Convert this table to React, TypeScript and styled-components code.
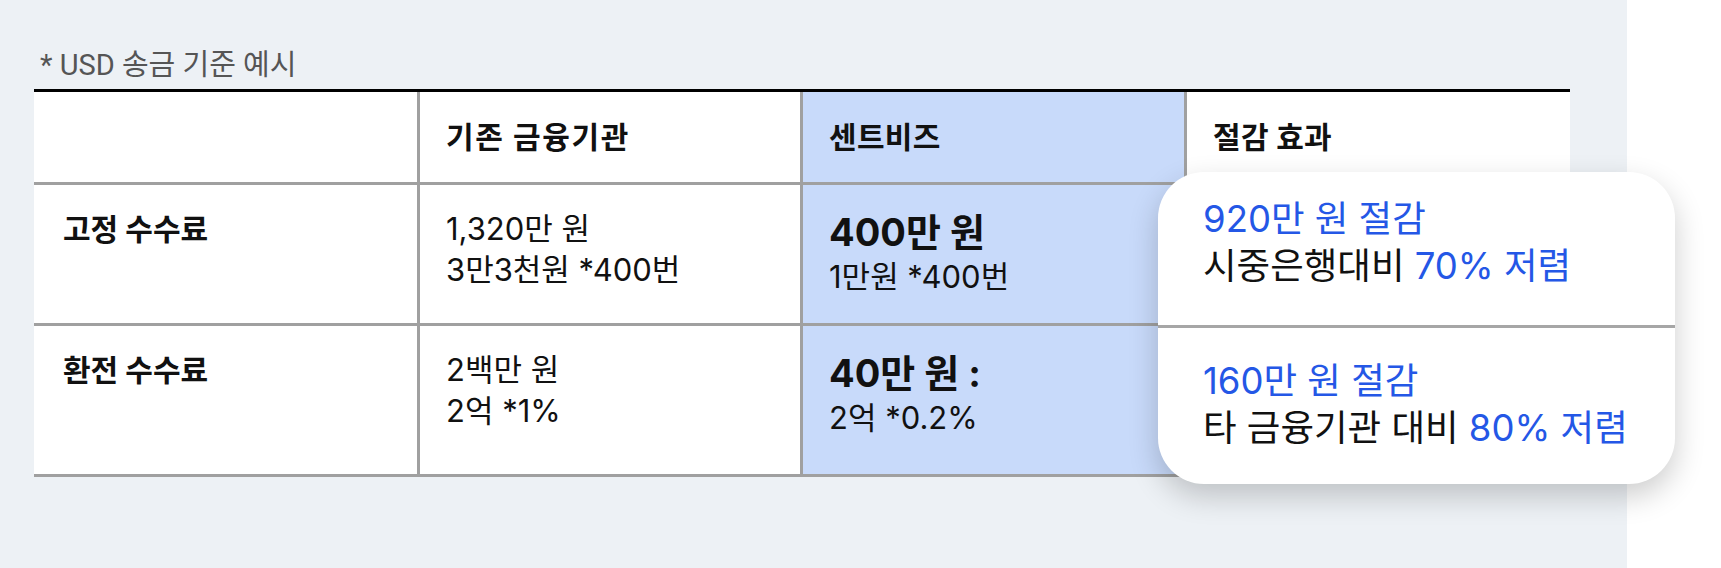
import React from "react";
import styled, { createGlobalStyle } from "styled-components";

const GlobalStyle = createGlobalStyle`
  body {
    margin: 0;
    background: #ffffff;
    font-family: Inter, "Noto Sans CJK KR", sans-serif;
    color: #111;
  }
`;

const Page = styled.div`
  display: flex;
  width: 1721px;
  height: 568px;
  overflow: hidden;
`;

const Section = styled.section`
  width: 1627px;
  height: 568px;
  box-sizing: border-box;
  padding: 47px 57px 0 34px;
  background: #edf1f5;
`;

const Caption = styled.p`
  margin: 0 0 6px 6px;
  font-family: Roboto, "Noto Sans CJK KR", sans-serif;
  font-size: 29px;
  line-height: 36px;
  color: #555;
`;

const TableWrap = styled.div`
  position: relative;
`;

const Table = styled.div`
  display: grid;
  grid-template-columns: 383px 383px 384px 386px;
  grid-template-rows: 93px 141px 151px;
  border-top: 3px solid #000;
`;

const Cell = styled.div<{ $first?: boolean; $accent?: boolean; $head?: boolean }>`
  box-sizing: border-box;
  display: flex;
  flex-direction: column;
  justify-content: ${(p) => (p.$head ? "center" : "flex-start")};
  padding: ${(p) => (p.$head ? "0 26px" : "23px 26px 0")};
  background: ${(p) => (p.$accent ? "#c8dafa" : "#fff")};
  border-left: ${(p) => (p.$first ? "none" : "3px solid #a0a0a0")};
  border-bottom: 3px solid #a0a0a0;
`;

const HeadText = styled.span<{ $wide?: boolean }>`
  font-size: 30px;
  font-weight: 700;
  line-height: 40px;
  letter-spacing: ${(p) => (p.$wide ? "1.6px" : "0.3px")};
`;

const Label = styled.span`
  font-size: 30px;
  font-weight: 700;
  line-height: 42px;
  padding-left: 3px;
`;

const Line = styled.span`
  font-size: 31px;
  font-weight: 400;
  line-height: 41px;
`;

const Amount = styled.span`
  font-size: 38px;
  font-weight: 700;
  line-height: 48px;
`;

const Card = styled.div`
  position: absolute;
  left: 1124px;
  top: 83px;
  width: 517px;
  height: 312px;
  box-sizing: border-box;
  display: flex;
  flex-direction: column;
  background: #fff;
  border-radius: 46px;
  box-shadow: 0 12px 30px rgba(0, 0, 0, 0.2);
  overflow: hidden;
`;

const Saving = styled.div<{ $top?: boolean }>`
  box-sizing: border-box;
  height: ${(p) => (p.$top ? "156px" : "auto")};
  flex: ${(p) => (p.$top ? "none" : "1")};
  padding: ${(p) => (p.$top ? "24px 20px 0 45px" : "30px 20px 0 45px")};
  border-bottom: ${(p) => (p.$top ? "3px solid #a6a6a6" : "none")};
  font-size: 36.5px;
  line-height: 47px;
  white-space: nowrap;
  color: #111;
`;

const Blue = styled.span`
  color: #2457e6;
`;

const rows = [
  {
    label: "고정 수수료",
    old: ["1,320만 원", "3만3천원 *400번"],
    amount: "400만 원",
    detail: "1만원 *400번",
  },
  {
    label: "환전 수수료",
    old: ["2백만 원", "2억 *1%"],
    amount: "40만 원 :",
    detail: "2억 *0.2%",
  },
];

const savings = [
  { amount: "160만 원 절감", base: "타 금융기관 대비 ", rate: "80% 저렴" },
];

export default function App() {
  return (
    <>
      <GlobalStyle />
      <Page>
        <Section>
          <Caption>* USD 송금 기준 예시</Caption>
          <TableWrap>
            <Table>
              <Cell $first $head />
              <Cell $head>
                <HeadText $wide>기존 금융기관</HeadText>
              </Cell>
              <Cell $head $accent>
                <HeadText>센트비즈</HeadText>
              </Cell>
              <Cell $head>
                <HeadText>절감 효과</HeadText>
              </Cell>
              {rows.map((r) => (
                <React.Fragment key={r.label}>
                  <Cell $first>
                    <Label>{r.label}</Label>
                  </Cell>
                  <Cell>
                    {r.old.map((l) => (
                      <Line key={l}>{l}</Line>
                    ))}
                  </Cell>
                  <Cell $accent>
                    <Amount>{r.amount}</Amount>
                    <Line>{r.detail}</Line>
                  </Cell>
                  <Cell />
                </React.Fragment>
              ))}
            </Table>
            <Card>
              <Saving $top>
                <Blue>920만 원 절감</Blue>
                <br />
                시중은행대비 <Blue>70% 저렴</Blue>
              </Saving>
              {savings.map((s) => (
                <Saving key={s.amount}>
                  <Blue>{s.amount}</Blue>
                  <br />
                  {s.base}
                  <Blue>{s.rate}</Blue>
                </Saving>
              ))}
            </Card>
          </TableWrap>
        </Section>
      </Page>
    </>
  );
}
